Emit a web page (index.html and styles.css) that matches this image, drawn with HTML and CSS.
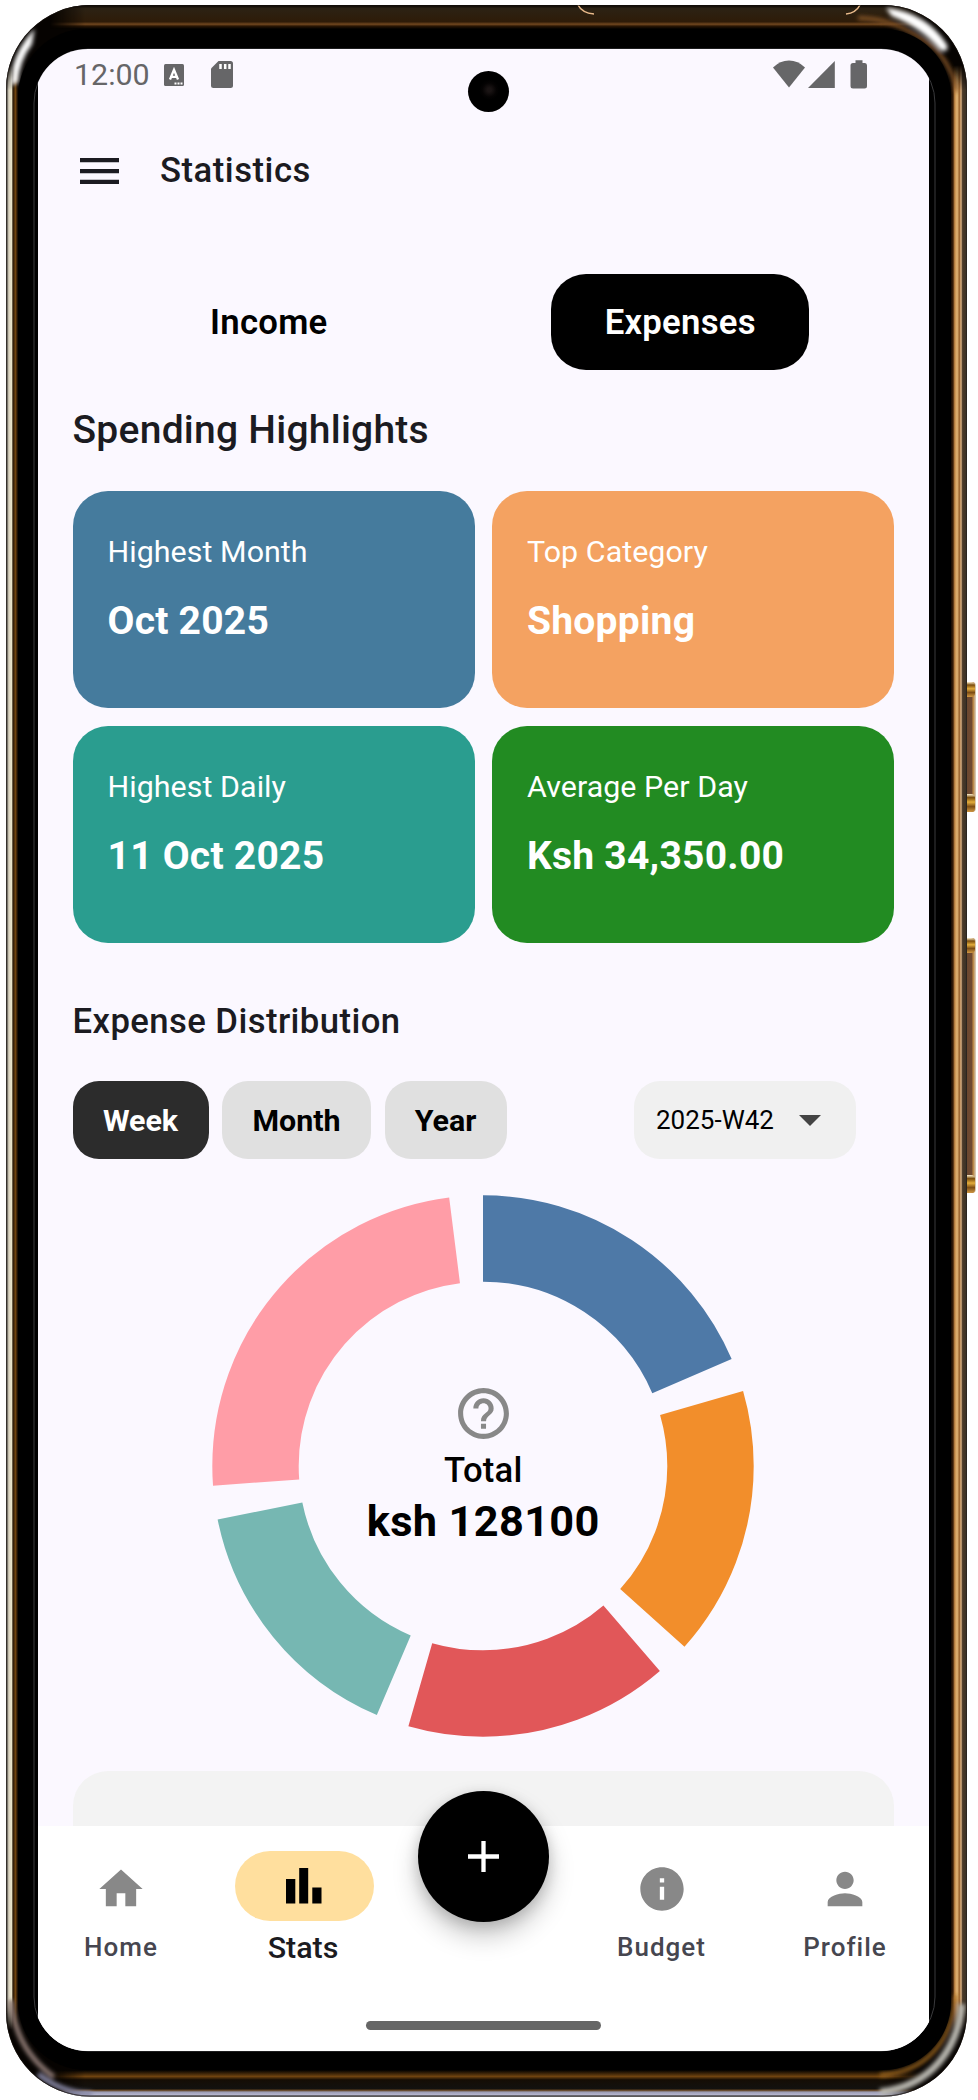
FILE: index.html
```html
<!DOCTYPE html>
<html lang="en">
<head>
<meta charset="utf-8">
<title>Statistics</title>
<link rel="stylesheet" href="styles.css">
</head>
<body>
<svg class="device" viewBox="0 0 978 2100" aria-hidden="true">
  <defs>
    <linearGradient id="shellTop" x1="0" y1="5" x2="0" y2="29" gradientUnits="userSpaceOnUse">
      <stop offset="0" stop-color="#080502"/><stop offset=".15" stop-color="#2c2214"/><stop offset=".7" stop-color="#2e1b08"/><stop offset=".8" stop-color="#72481f"/><stop offset=".88" stop-color="#2a1604"/><stop offset="1" stop-color="#000"/>
    </linearGradient>
    <linearGradient id="shellBottom" x1="0" y1="2070" x2="0" y2="2096" gradientUnits="userSpaceOnUse">
      <stop offset="0" stop-color="#000"/><stop offset=".25" stop-color="#6f430f"/><stop offset=".38" stop-color="#150d05"/><stop offset=".72" stop-color="#12110f"/><stop offset=".78" stop-color="#60401e"/><stop offset=".85" stop-color="#9c9cb4"/><stop offset=".95" stop-color="#b4b4cc"/><stop offset="1" stop-color="#777782"/>
    </linearGradient>
    <linearGradient id="shellLeft" x1="5.5" y1="0" x2="18" y2="0" gradientUnits="userSpaceOnUse">
      <stop offset="0" stop-color="#aaa"/><stop offset=".12" stop-color="#55514a"/><stop offset=".26" stop-color="#d8d2c0"/><stop offset=".48" stop-color="#e9e3c8"/><stop offset=".6" stop-color="#2a1a08"/><stop offset=".8" stop-color="#70440f"/><stop offset="1" stop-color="#0a0400"/>
    </linearGradient>
    <linearGradient id="shellRight" x1="950" y1="0" x2="967" y2="0" gradientUnits="userSpaceOnUse">
      <stop offset="0" stop-color="#000"/><stop offset=".18" stop-color="#3b1f09"/><stop offset=".28" stop-color="#c48a48"/><stop offset=".42" stop-color="#e3b777"/><stop offset=".55" stop-color="#9a642e"/><stop offset=".65" stop-color="#dcb588"/><stop offset=".74" stop-color="#4b3a28"/><stop offset=".95" stop-color="#393126"/><stop offset="1" stop-color="#777"/>
    </linearGradient>
    <linearGradient id="button" x1="961" y1="0" x2="976" y2="0" gradientUnits="userSpaceOnUse">
      <stop offset="0" stop-color="#9b620f"/><stop offset=".2" stop-color="#d49336"/><stop offset=".3" stop-color="#69472d"/><stop offset=".7" stop-color="#6f4932"/><stop offset=".82" stop-color="#b88443"/><stop offset="1" stop-color="#ddd5c8"/>
    </linearGradient>
    <linearGradient id="buttonCap" x1="0" y1="0" x2="0" y2="1">
      <stop offset="0" stop-color="#fff2cf"/><stop offset=".2" stop-color="#7a4c0c"/><stop offset=".45" stop-color="#e3ad3c"/><stop offset=".7" stop-color="#7d4d15"/><stop offset="1" stop-color="#d39a42"/>
    </linearGradient>
    <linearGradient id="fadeH" x1="50" y1="0" x2="925" y2="0" gradientUnits="userSpaceOnUse">
      <stop offset="0" stop-color="#000"/><stop offset=".04" stop-color="#fff"/><stop offset=".95" stop-color="#fff"/><stop offset="1" stop-color="#000"/>
    </linearGradient>
    <linearGradient id="fadeV" x1="0" y1="65" x2="0" y2="2030" gradientUnits="userSpaceOnUse">
      <stop offset="0" stop-color="#000"/><stop offset=".013" stop-color="#fff"/><stop offset=".984" stop-color="#fff"/><stop offset="1" stop-color="#000"/>
    </linearGradient>
    <mask id="maskH" maskUnits="userSpaceOnUse" x="0" y="0" width="978" height="2100"><rect width="978" height="2100" fill="url(#fadeH)"/></mask>
    <mask id="maskV" maskUnits="userSpaceOnUse" x="0" y="0" width="978" height="2100"><rect width="978" height="2100" fill="url(#fadeV)"/></mask>
    <clipPath id="shell"><rect x="6" y="5" width="961" height="2091.500" rx="84"/></clipPath>
    <filter id="soft" x="-30%" y="-30%" width="160%" height="160%"><feGaussianBlur stdDeviation="2"/></filter>
  </defs>
  <g>
    <rect x="961" y="682" width="15" height="130" rx="4" fill="url(#button)"/>
    <rect x="962" y="682" width="13" height="15" rx="4" fill="url(#buttonCap)"/>
    <rect x="962" y="794" width="13" height="18" rx="4" fill="url(#buttonCap)"/>
    <rect x="961" y="938" width="15" height="255" rx="4" fill="url(#button)"/>
    <rect x="962" y="938" width="13" height="15" rx="4" fill="url(#buttonCap)"/>
    <rect x="962" y="1175" width="13" height="18" rx="4" fill="url(#buttonCap)"/>
  </g>
  <g clip-path="url(#shell)">
    <rect width="978" height="2100" fill="#060301"/>
    <g mask="url(#maskH)">
      <rect x="50" y="5" width="875" height="24" fill="url(#shellTop)"/>
      <rect x="50" y="2070" width="875" height="27" fill="url(#shellBottom)"/>
    </g>
    <g mask="url(#maskV)">
      <rect x="5" y="65" width="14" height="1965" fill="url(#shellLeft)"/>
      <rect x="949" y="65" width="19" height="1965" fill="url(#shellRight)"/>
    </g>
    <g fill="none" filter="url(#soft)">
      <path d="M12 84L14 66Q19 48 33 32L31 44Q19 60 17 82Z" fill="#fff" stroke="#fff" stroke-width="2"/>
      <path d="M858 18Q896 18 932 46Q951 63 957 92" stroke="#8d5a2a" stroke-width="3.500"/>
      <path d="M888 9Q926 14 946 45Q948 52 941 49Q922 27 892 15Z" fill="#fff" stroke="#fff" stroke-width="2"/>
      <path d="M11 2000C14 2036 30 2060 54 2077" stroke="#8f7a74" stroke-width="5"/>
      <path d="M38 2074Q62 2093 92 2094" stroke="#8888a6" stroke-width="5"/>
      <path d="M956 1995C952 2040 928 2072 880 2075" stroke="#a36b20" stroke-width="3.500"/>
      <path d="M962 2004C958 2048 932 2086 880 2092" stroke="#b9b8b0" stroke-width="7"/>
    </g>
    <path d="M578 5Q582 13 594 14M860 5Q856 13 846 14" fill="none" stroke="#e8b98a" stroke-width="1.500"/>
  </g>
  <rect x="6.500" y="5.500" width="960" height="2090.500" rx="83.500" fill="none" stroke="#15100a" stroke-opacity=".65"/>
  <rect x="18" y="29" width="933" height="2041" rx="68" fill="#000"/>
  <rect x="34" y="49" width="901" height="2002" rx="54" fill="none" stroke="#3a3a3c"/>
</svg>

<div class="screen">
  <div class="camera"></div>
  <div class="statusbar">
    <span class="clock">12:00</span>
    <svg class="ic-a" width="20" height="22" viewBox="0 0 20 22"><rect width="20" height="22" rx="1.500" fill="#666668"/><path d="M6 15.500L10 5.800L14 15.500M7.200 12.800H12.800" fill="none" stroke="#fff" stroke-width="2.300"/><path d="M10.500 19.500h2m1-0h2m1 0h2" stroke="#fff" stroke-width="1.800"/></svg>
    <svg class="ic-sd" width="22" height="27" viewBox="0 0 22 27"><path d="M7.500 0H19.500Q22 0 22 2.500V24.500Q22 27 19.500 27H2.500Q0 27 0 24.500V7.500Z" fill="#666668"/><path d="M9.500 3v5M14.200 3v5M18.500 3v5" stroke="#fff" stroke-width="2.500"/></svg>
    <svg class="ic-right" width="94" height="29" viewBox="0 0 94 29" fill="#666668"><path d="M0 7.500Q7 .5 16 .5T32 7.500L16 27.500Z"/><path d="M35 28L61.800 1V28Z"/><path d="M77.500 5.500Q77.500 3 80 3H82.500V.3H89.500V3H92Q94 3 94 5.500V26Q94 28.500 91.500 28.500H80Q77.500 28.500 77.500 26Z"/></svg>
  </div>

  <header class="appbar">
    <svg width="39" height="26" viewBox="0 0 39 26" fill="#1b1b21"><path d="M0 0h39v4.300H0zM0 10.900h39v4.300H0zM0 21.700h39v4.300H0z"/></svg>
    <h1 class="title">Statistics</h1>
  </header>

  <div class="tabs">
    <div class="tab"><span>Income</span></div>
    <div class="tab"><span class="active">Expenses</span></div>
  </div>

  <main class="content">
    <h2 class="highlights-title">Spending Highlights</h2>
    <div class="cards">
      <section class="card blue"><p>Highest Month</p><strong>Oct 2025</strong></section>
      <section class="card orange"><p>Top Category</p><strong>Shopping</strong></section>
      <section class="card teal"><p>Highest Daily</p><strong>11 Oct 2025</strong></section>
      <section class="card green"><p>Average Per Day</p><strong>Ksh 34,350.00</strong></section>
    </div>
    <h3 class="dist-title">Expense Distribution</h3>
    <div class="filters">
      <button class="chip week">Week</button>
      <button class="chip month">Month</button>
      <button class="chip year">Year</button>
      <div class="picker"><span>2025-W42</span><svg width="22" height="11" viewBox="0 0 22 11"><path d="M0 0H22L11 11Z" fill="#444"/></svg></div>
    </div>
    <div class="donut">
      <svg class="ring" viewBox="-271 -271 542 542">
        <g fill="none" stroke-width="86.400" transform="rotate(-90)">
          <circle r="227.500" pathLength="360" stroke="#4e79a7" stroke-dasharray="66.700 293.300"/>
          <circle r="227.500" pathLength="360" stroke="#f28e2b" stroke-dasharray="58 302" stroke-dashoffset="-73.900"/>
          <circle r="227.500" pathLength="360" stroke="#e15759" stroke-dasharray="56.800 303.200" stroke-dashoffset="-139.200"/>
          <circle r="227.500" pathLength="360" stroke="#76b7b2" stroke-dasharray="55.500 304.500" stroke-dashoffset="-203.100"/>
          <circle r="227.500" pathLength="360" stroke="#ff9da7" stroke-dasharray="87 273" stroke-dashoffset="-265.800"/>
        </g>
      </svg>
      <div class="total">
        <svg width="61" height="61" viewBox="0 0 24 24" fill="#888"><path d="M11 18h2v-2h-2v2zm1-16C6.480 2 2 6.480 2 12s4.480 10 10 10 10-4.480 10-10S17.520 2 12 2zm0 18c-4.410 0-8-3.590-8-8s3.590-8 8-8 8 3.590 8 8-3.590 8-8 8zm0-14c-2.210 0-4 1.790-4 4h2c0-1.100.9-2 2-2s2 .9 2 2c0 2-3 1.750-3 5h2c0-2.250 3-2.500 3-5 0-2.210-1.790-4-4-4z"/></svg>
        <span class="total-label">Total</span>
        <span class="total-value">ksh 128100</span>
      </div>
    </div>
    <div class="sheet"></div>
  </main>

  <nav class="nav">
    <a class="item home"><svg width="52" height="52" viewBox="0 0 24 24"><path d="M10 20v-6h4v6h5v-8h3L12 3 2 12h3v8z"/></svg><span>Home</span></a>
    <a class="item stats"><i class="pill"><svg width="36" height="36" viewBox="0 0 36 36"><path d="M0 11h9.300v24.500H0zM13.200 0h9v35.500h-9zM26.300 19.500h9.200v16h-9.200z"/></svg></i><span>Stats</span></a>
    <a class="item budget"><svg width="52" height="52" viewBox="0 0 24 24"><path d="M12 2C6.480 2 2 6.480 2 12s4.480 10 10 10 10-4.480 10-10S17.520 2 12 2zm1 15h-2v-6h2v6zm0-8h-2V7h2v2z"/></svg><span>Budget</span></a>
    <a class="item profile"><svg width="52" height="52" viewBox="0 0 24 24"><path d="M12 12c2.210 0 4-1.790 4-4s-1.790-4-4-4-4 1.790-4 4 1.790 4 4 4zm0 2c-2.670 0-8 1.340-8 4v2h16v-2c0-2.660-5.330-4-8-4z"/></svg><span>Profile</span></a>
    <div class="fab"><svg width="31" height="31" viewBox="0 0 31 31"><path d="M15.500 0V31M0 15.500H31" stroke="#fff" stroke-width="4.300"/></svg></div>
    <div class="gesture"></div>
  </nav>
</div>
</body>
</html>
```
FILE: styles.css
```css
* { box-sizing: border-box; margin: 0; padding: 0; }
body { position: relative; width: 978px; height: 2100px; overflow: hidden; background: #fff; font-family: Roboto, "Liberation Sans", sans-serif; color: #1b1b21; }
svg { display: block; flex: none; }
h1, h2, h3 { font-weight: 500; }
.device { position: absolute; left: 0; top: 0; width: 978px; height: 2100px; }

.screen { position: relative; width: 891px; height: 2002px; margin: 49px 0 0 38px; background: #fbf8ff; clip-path: inset(0 -6px 0 -4px round 54px); display: flex; flex-direction: column; }
.camera { position: absolute; left: 430px; top: 22px; width: 41px; height: 41px; border-radius: 50%; background: radial-gradient(circle at 52% 46%, #1a1414 0 2px, #050303 7px, #000 10px); }
.statusbar { display: flex; height: 51px; padding: 0 62px 0 36px; align-items: center; }
.clock { width: 76px; font-size: 30.400px; color: #666668; letter-spacing: 0; line-height: 51px; }
.ic-a { margin-left: 14px; }
.ic-sd { margin-left: 27px; }
.ic-right { margin-left: auto; }

.appbar { display: flex; align-items: center; height: 141px; padding: 0 42px; gap: 41px; }
.title { font-size: 34.700px; letter-spacing: .5px; line-height: 44px; margin-top: -1px; }

.tabs { display: grid; grid-template-columns: 1fr 1fr; height: 129px; padding: 33px 43px 0 25px; }
.tab { display: flex; justify-content: center; align-items: center; font-size: 34.700px; font-weight: 600; letter-spacing: .25px; color: #000; }
.tab:first-child { padding-right: 0; }
.tab .active { display: flex; align-items: center; justify-content: center; width: 258px; height: 96px; border-radius: 35px; background: #000; color: #fff; }

.content { flex: 1; padding: 0 35px 0 34.500px; min-height: 0; overflow: hidden; display: flex; flex-direction: column; }
.highlights-title { font-size: 39px; line-height: 46px; margin-top: 37px; letter-spacing: .25px; }
.cards { display: grid; grid-template-columns: 1fr 1fr; grid-auto-rows: 217px; gap: 17.500px; margin-top: 38px; }
.card { border-radius: 35px; padding: 40px 35px; color: #fff; }
.card p { font-size: 30.400px; line-height: 42px; letter-spacing: .05px; }
.card strong { display: block; font-size: 39px; line-height: 48px; margin-top: 24px; letter-spacing: .25px; }
.blue { background: #457b9d; }
.orange { background: #f4a261; }
.teal { background: #2a9d8f; }
.green { background: #228b22; }
.dist-title { font-size: 34.700px; line-height: 42px; margin-top: 57.500px; letter-spacing: .42px; }
.filters { display: flex; margin-top: 39px; height: 78px; }
.chip { border: 0; border-radius: 26px; background: #e0e0e0; color: #000; font: 700 30.400px Roboto, sans-serif; margin-right: 13.500px; }
.week { width: 136px; background: #2c2c2c; color: #fff; }
.month { width: 149px; }
.year { width: 122px; }
.picker { display: flex; align-items: center; gap: 25px; width: 222px; margin-left: 114px; padding-left: 22px; border-radius: 26px; background: #f0f0f0; color: #000; font-size: 26px; }
.donut { display: grid; place-items: center; width: 542px; height: 542px; margin: 35.500px auto 0; }
.ring { grid-area: 1 / 1; width: 542px; height: 542px; }
.total { grid-area: 1 / 1; display: flex; flex-direction: column; align-items: center; color: #000; padding-top: 4px; }
.total-label { font-size: 34.700px; font-weight: 500; line-height: 44px; margin-top: 4px; letter-spacing: .2px; }
.total-value { font-size: 43.300px; font-weight: 700; line-height: 60px; letter-spacing: .35px; }
.sheet { flex: 1; margin-top: 34.500px; background: #f3f3f3; border-radius: 35px 35px 0 0; }

.nav { position: relative; height: 225.500px; background: #fff; }
.item { position: absolute; top: 37px; width: 140px; display: flex; flex-direction: column; align-items: center; font-size: 26px; font-weight: 500; letter-spacing: 1px; color: #46464f; fill: #888; }
.item span { line-height: 36px; margin-top: 14px; }
.home { left: 13px; }
.budget { left: 553.500px; }
.profile { left: 737px; }
.stats { left: 196px; top: 25px; font-size: 30.400px; letter-spacing: 0; color: #1b1b21; fill: #000; }
.stats span { margin-top: 9px; margin-right: 2px; }
.pill { display: grid; place-items: center; width: 139px; height: 70px; border-radius: 35px; background: #ffdf9e; }
.fab { position: absolute; left: 380px; top: -35px; width: 131px; height: 131px; border-radius: 50%; display: grid; place-items: center; background: #000; box-shadow: 0 14px 26px rgba(0,0,0,.22), 0 4px 14px rgba(0,0,0,.16); }
.gesture { position: absolute; left: 328px; top: 195.500px; width: 235px; height: 9px; border-radius: 5px; background: #666; }
```
